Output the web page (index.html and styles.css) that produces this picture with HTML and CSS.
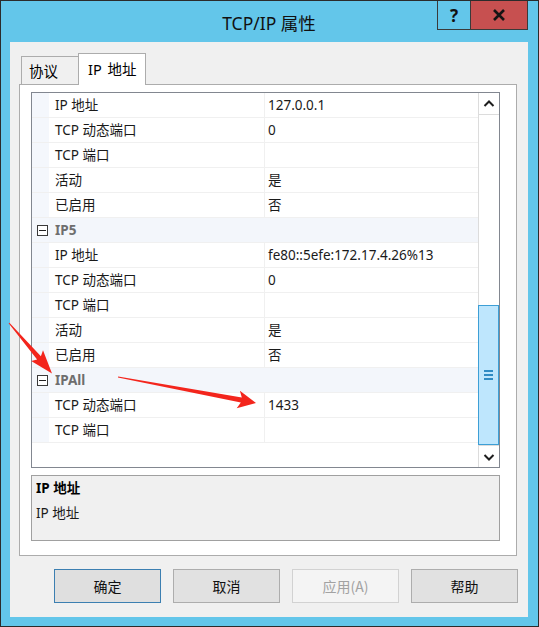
FILE: index.html
```html
<!DOCTYPE html>
<html lang="zh-CN">
<head>
<meta charset="utf-8">
<title>TCP/IP 属性</title>
<link rel="stylesheet" href="styles.css">
</head>
<body>
<div class="window">
  <div class="titlebar">
    <div class="spacer"></div>
    <div class="title">TCP/IP 属性</div>
    <div class="caption">
      <div class="cap help">?</div>
      <div class="cap close">
        <svg width="14" height="12" viewBox="0 0 14 12"><path d="M2 1 L12 11 M12 1 L2 11" stroke="#141414" stroke-width="2.6" fill="none"/></svg>
      </div>
    </div>
  </div>
  <div class="client">
    <div class="tabs">
      <div class="tab">协议</div>
      <div class="tab active">IP 地址</div>
    </div>
    <div class="page">
      <div class="grid">
        <div class="rows">
          <div class="row"><div class="gut"></div><div class="name">IP 地址</div><div class="val">127.0.0.1</div></div>
          <div class="row"><div class="gut"></div><div class="name">TCP 动态端口</div><div class="val">0</div></div>
          <div class="row"><div class="gut"></div><div class="name">TCP 端口</div><div class="val"></div></div>
          <div class="row"><div class="gut"></div><div class="name">活动</div><div class="val">是</div></div>
          <div class="row"><div class="gut"></div><div class="name">已启用</div><div class="val">否</div></div>
          <div class="row cat"><div class="gut"><span class="box"></span></div><div class="cname">IP5</div></div>
          <div class="row"><div class="gut"></div><div class="name">IP 地址</div><div class="val">fe80::5efe:172.17.4.26%13</div></div>
          <div class="row"><div class="gut"></div><div class="name">TCP 动态端口</div><div class="val">0</div></div>
          <div class="row"><div class="gut"></div><div class="name">TCP 端口</div><div class="val"></div></div>
          <div class="row"><div class="gut"></div><div class="name">活动</div><div class="val">是</div></div>
          <div class="row"><div class="gut"></div><div class="name">已启用</div><div class="val">否</div></div>
          <div class="row cat"><div class="gut"><span class="box"></span></div><div class="cname">IPAll</div></div>
          <div class="row"><div class="gut"></div><div class="name">TCP 动态端口</div><div class="val">1433</div></div>
          <div class="row"><div class="gut"></div><div class="name">TCP 端口</div><div class="val"></div></div>
        </div>
        <div class="scrollbar">
          <div class="sb-btn up">
            <svg width="20" height="20" viewBox="0 0 20 20"><polyline points="5.5,12 10,7.5 14.5,12" stroke="#1e1e1e" stroke-width="2" fill="none"/></svg>
          </div>
          <div class="sb-track">
            <div class="sb-thumb">
              <div class="grip"><span></span><span></span><span></span></div>
            </div>
          </div>
          <div class="sb-btn down">
            <svg width="20" height="20" viewBox="0 0 20 20"><polyline points="5.5,8 10,12.5 14.5,8" stroke="#1e1e1e" stroke-width="2" fill="none"/></svg>
          </div>
        </div>
      </div>
      <div class="desc">
        <div class="desc-title">IP 地址</div>
        <div class="desc-text">IP 地址</div>
      </div>
    </div>
    <div class="buttons">
      <div class="btn default">确定</div>
      <div class="btn">取消</div>
      <div class="btn disabled">应用(A)</div>
      <div class="btn">帮助</div>
    </div>
  </div>
  <svg class="arrows" width="539" height="627" viewBox="0 0 539 627">
    <polygon points="8.6,323.3 37.1,359.4 31.2,361.0 52,373.5 43.0,350.2 40.9,356.2 9.4,322.7" fill="#f3251c"/>
    <polygon points="117.9,377.6 240.8,402.6 236.7,408.3 256,403 239.9,390.7 241.8,397.6 118.1,376.4" fill="#f3251c"/>
  </svg>
</div>
</body>
</html>
```

FILE: styles.css
```css
html, body {
  margin: 0;
  padding: 0;
  background: #ffffff;
}

.window {
  position: relative;
  width: 539px;
  height: 627px;
  box-sizing: border-box;
  border: 1px solid #2b2b2b;
  background: #63c6ea;
  padding: 0 10px 9px 9px;
  display: flex;
  flex-direction: column;
  font-family: "Noto Sans", "Noto Sans CJK SC", sans-serif;
  color: #000;
}

/* title bar */
.titlebar {
  height: 41px;
  flex: none;
  display: grid;
  grid-template-columns: 1fr auto 1fr;
}

.title {
  align-self: center;
  font-size: 17.5px;
  padding-top: 2px;
  color: #111;
}

.caption {
  justify-self: end;
  align-self: start;
  display: flex;
}

.cap {
  height: 29px;
  box-sizing: border-box;
  display: flex;
  align-items: center;
  justify-content: center;
  border: 1px solid #3a3a3a;
  border-top: none;
}

.help {
  width: 34px;
  font-weight: 700;
  font-size: 17px;
  color: #111;
}

.close {
  width: 57px;
  border-left: none;
  background: #c75050;
}

/* client area */
.client {
  flex: 1;
  background: #f0f0f0;
  padding: 11px 11px 0 9px;
  display: flex;
  flex-direction: column;
}

.tabs {
  display: flex;
  align-items: flex-end;
  padding-left: 2px;
  height: 31px;
  position: relative;
  z-index: 1;
}

.tab {
  height: 28px;
  box-sizing: border-box;
  padding: 0 7px;
  width: 58px;
  border: 1px solid #acacac;
  border-bottom: none;
  background: #f0f0f0;
  font-size: 14.5px;
  line-height: 28px;
  white-space: nowrap;
}

.tab.active {
  width: 68px;
  height: 32px;
  margin-bottom: -1px;
  margin-left: -1px;
  background: #ffffff;
  line-height: 30px;
  padding-left: 9px;
  word-spacing: 2px;
}

.page {
  border: 1px solid #acacac;
  background: #ffffff;
  padding: 7px 16px 14px 11px;
  height: 472px;
  box-sizing: border-box;
}

/* property grid */
.grid {
  height: 376px;
  box-sizing: border-box;
  border: 1px solid #828790;
  display: flex;
  background: #ffffff;
}

.rows {
  flex: 1;
  display: flex;
  flex-direction: column;
}

.row {
  height: 25px;
  box-sizing: border-box;
  border-bottom: 1px solid #f0f0f0;
  display: grid;
  grid-template-columns: 17px 216px 1fr;
  font-size: 13.5px;
  line-height: 24px;
  color: #1a1a1a;
}

.gut {
  background: #f4f7fc;
  display: flex;
  align-items: center;
  justify-content: center;
}

.name {
  padding-left: 6px;
  border-right: 1px solid #f0f0f0;
  white-space: nowrap;
}

.val {
  padding-left: 3px;
  white-space: nowrap;
}

.row.cat {
  grid-template-columns: 17px 1fr;
  background: #f3f6fb;
}

.cname {
  padding-left: 6px;
  font-weight: 700;
  color: #6e6e6e;
}

.box {
  width: 11px;
  height: 11px;
  box-sizing: border-box;
  border: 1px solid #3a3a3a;
  background: #ffffff;
  margin-left: 4px;
  display: flex;
  align-items: center;
  justify-content: center;
}

.box::after {
  content: "";
  width: 7px;
  height: 1px;
  background: #222;
}

/* scrollbar */
.scrollbar {
  width: 21px;
  box-sizing: border-box;
  border-left: 1px solid #dcdcdc;
  display: flex;
  flex-direction: column;
  background: #ffffff;
}

.sb-btn {
  height: 21px;
  flex: none;
  display: flex;
  align-items: center;
  justify-content: center;
}

.sb-btn.up {
  border-bottom: 1px solid #dcdcdc;
}

.sb-btn.down {
  border-top: 1px solid #dcdcdc;
}

.sb-track {
  flex: 1;
  display: flex;
  flex-direction: column;
  justify-content: flex-end;
}

.sb-thumb {
  height: 140px;
  box-sizing: border-box;
  border: 1px solid #3d9fd6;
  background: #bee6fd;
  margin-left: -1px;
  display: flex;
  align-items: center;
  justify-content: center;
}

.grip {
  display: flex;
  flex-direction: column;
  gap: 2px;
}

.grip span {
  width: 9px;
  height: 2px;
  background: #2f8bc4;
}

/* description */
.desc {
  margin-top: 7px;
  height: 66px;
  box-sizing: border-box;
  border: 1px solid #a0a0a0;
  background: #f0f0f0;
  padding: 0 4px;
  font-size: 13.5px;
  line-height: 25px;
  color: #1a1a1a;
}

.desc-title {
  font-weight: 700;
  color: #000;
}

/* buttons */
.buttons {
  margin-top: 13px;
  display: flex;
  justify-content: flex-end;
  gap: 12px;
  margin-right: -1px;
}

.btn {
  width: 107px;
  height: 34px;
  box-sizing: border-box;
  border: 1px solid #adadad;
  background: #e1e1e1;
  display: flex;
  align-items: center;
  justify-content: center;
  font-family: "Noto Sans CJK SC", sans-serif;
  font-size: 14px;
  color: #111;
}

.btn.default {
  border-color: #3c7fb1;
  background: #dfdfdf;
}

.btn.disabled {
  background: #f4f4f4;
  border-color: #d2d2d2;
  color: #a2a2a2;
}

/* annotation arrows overlay */
.arrows {
  position: absolute;
  left: -1px;
  top: -1px;
  pointer-events: none;
}
```
